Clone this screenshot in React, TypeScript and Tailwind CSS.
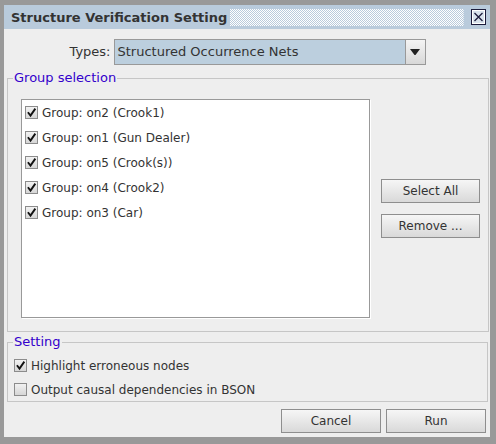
import React from "react";

function Check({ checked }: { checked: boolean }) {
  return (
    <div className="w-[13px] h-[13px] border border-[#8c8c8c] bg-gradient-to-b from-[#f2f2f2] to-[#d6d6d6] flex items-center justify-center shrink-0">
      {checked && (
        <svg width="11" height="11" viewBox="0 0 11 11">
          <path d="M2.5 6 L4.5 8.6 L8.8 2.4" fill="none" stroke="#111" strokeWidth="1.9" strokeLinecap="square" />
        </svg>
      )}
    </div>
  );
}

function Btn({ label, w }: { label: string; w: string }) {
  return (
    <div className={`${w} h-[24px] border border-[#8e8e8e] bg-gradient-to-b from-[#f6f6f6] to-[#d9d9d9] flex items-center justify-center text-[12px] text-[#333]`}>
      {label}
    </div>
  );
}

export default function App() {
  const groups = [
    "Group: on2 (Crook1)",
    "Group: on1 (Gun Dealer)",
    "Group: on5 (Crook(s))",
    "Group: on4 (Crook2)",
    "Group: on3 (Car)",
  ];
  return (
    <div className="w-[496px] h-[444px] bg-[#999999] pt-[5px] pl-[4px] pr-[6px] pb-[7px] flex flex-col font-['DejaVu_Sans',sans-serif] text-[#333]">
      {/* title bar */}
      <div className="h-[24px] bg-[#b9cbdc] flex items-center pl-[7px] pr-[4px] shrink-0">
        <span className="text-[13px] font-bold text-[#333] leading-none whitespace-nowrap">Structure Verification Setting</span>
        <svg className="flex-1 h-[17px] ml-[3px] mr-[7px]" preserveAspectRatio="none">
          <defs>
            <pattern id="chk" width="2" height="2" patternUnits="userSpaceOnUse">
              <rect x="0" y="0" width="1" height="1" fill="#ffffff" />
              <rect x="1" y="1" width="1" height="1" fill="#ffffff" />
            </pattern>
          </defs>
          <rect width="100%" height="100%" fill="url(#chk)" />
        </svg>
        <svg width="15" height="16" viewBox="0 0 15 16" className="shrink-0">
          <rect x="0.5" y="0.5" width="14" height="15" fill="#d8e2ec" stroke="#1c1c3c" />
          <rect x="1.5" y="1.5" width="12" height="13" fill="none" stroke="#ffffff" />
          <path d="M3.5 4 L11.5 12 M11.5 4 L3.5 12" stroke="#1c1c3c" strokeWidth="1.3" />
        </svg>
      </div>
      {/* body */}
      <div className="flex-1 bg-[#eeeeee] flex flex-col pl-[3px] pr-[2px]">
        <div className="mt-[10px] flex items-center justify-center gap-[3px]">
          <span className="text-[13px]">Types:</span>
          <div className="w-[312px] h-[26px] border border-[#999] bg-[#bccfde] flex items-center">
            <span className="flex-1 pl-[3px] text-[13px] text-[#333]">Structured Occurrence Nets</span>
            <div className="w-[20px] h-full border-l border-[#999] bg-gradient-to-b from-[#f4f4f4] to-[#d8d8d8] flex items-center justify-center">
              <svg width="10" height="6" viewBox="0 0 10 6">
                <path d="M0 0 L10 0 L5.5 6 L4.5 6 Z" fill="#222" />
              </svg>
            </div>
          </div>
        </div>

        <fieldset className="mt-[5px] border border-[#c6c6c6] p-0">
          <legend className="ml-[5px] px-[1px] text-[13px] leading-[16px] text-[#3300cc]">Group selection</legend>
          <div className="flex items-center gap-[11px] pl-[13px] pr-[8px] pt-[13px] pb-[13px]">
            <div className="w-[349px] h-[219px] bg-white border border-[#999] shadow-[1px_1px_0_#ffffff] pl-[3px]">
              {groups.map((g) => (
                <div key={g} className="h-[25px] flex items-center gap-[4px]">
                  <Check checked />
                  <span className="text-[12px] text-[#333]">{g}</span>
                </div>
              ))}
            </div>
            <div className="flex flex-col gap-[11px]">
              <Btn label="Select All" w="w-[99px]" />
              <Btn label="Remove ..." w="w-[99px]" />
            </div>
          </div>
        </fieldset>

        <fieldset className="mt-[2px] border border-[#c6c6c6] p-0">
          <legend className="ml-[5px] px-[1px] text-[13px] leading-[16px] text-[#3300cc]">Setting</legend>
          <div className="flex flex-col gap-[1px] pl-[6px] pt-[4px]">
            <div className="h-[23px] flex items-center gap-[4px]">
              <Check checked />
              <span className="text-[12px]">Highlight erroneous nodes</span>
            </div>
            <div className="h-[23px] flex items-center gap-[4px]">
              <Check checked={false} />
              <span className="text-[12px]">Output causal dependencies in BSON</span>
            </div>
          </div>
        </fieldset>

        <div className="mt-auto mb-[4px] flex justify-end gap-[5px] pr-[2px]">
          <Btn label="Cancel" w="w-[100px]" />
          <Btn label="Run" w="w-[100px]" />
        </div>
      </div>
    </div>
  );
}
